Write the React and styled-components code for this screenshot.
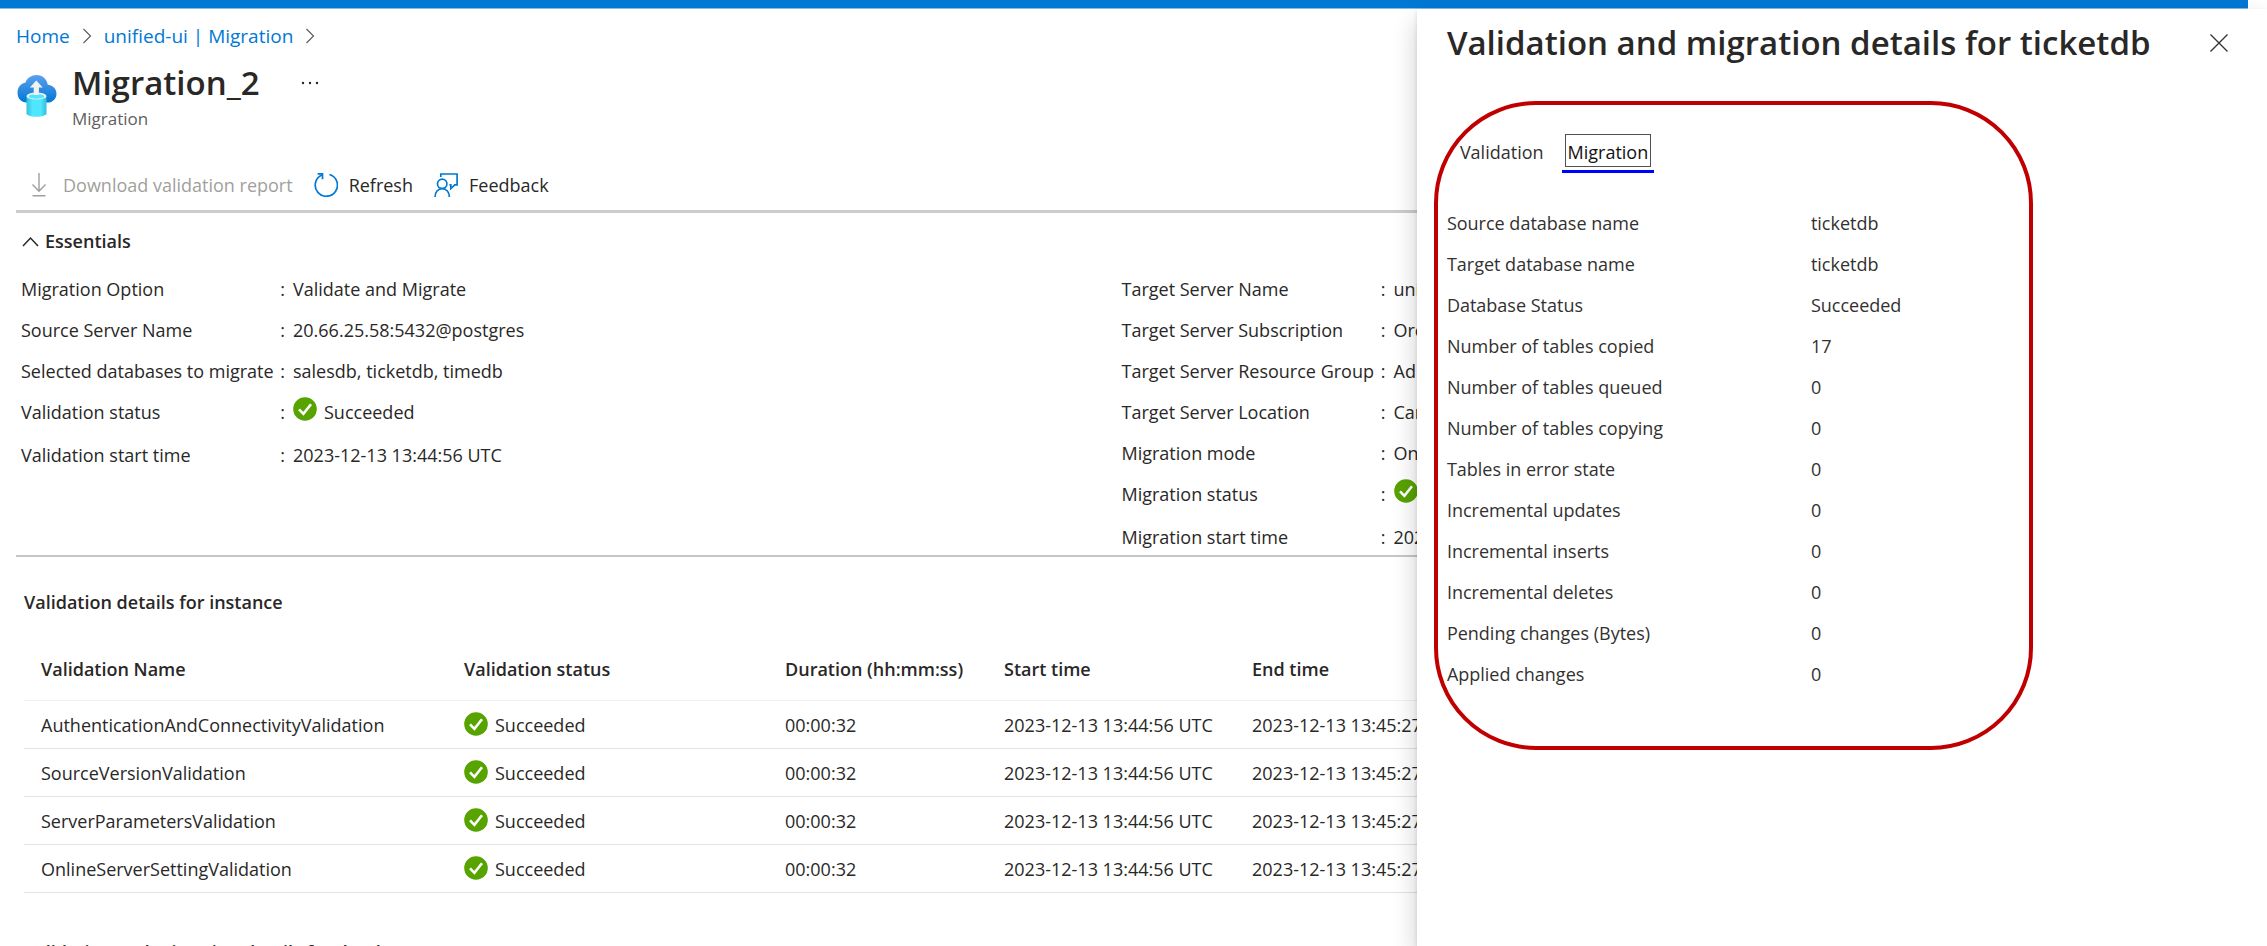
import React, { useState } from "react";
import styled, { createGlobalStyle, css } from "styled-components";

const GlobalStyle = createGlobalStyle`
  *, *::before, *::after { box-sizing: border-box; }
  body {
    margin: 0;
    background: #fff;
    color: #292827;
    font: 400 18px/24px "Open Sans", "Noto Sans", sans-serif;
  }
  h1, h2, h3, p, dl, dd, ol { margin: 0; padding: 0; }
  button { font: inherit; color: inherit; background: none; border: 0; padding: 0; cursor: pointer; }
  svg { display: block; flex: none; }
`;

const Shell = styled.div`
  position: relative;
  height: 100vh;
  overflow: hidden;
`;

const TopBar = styled.div`
  height: 9px;
  margin-right: 19px;
  background: #0078d4;
  border-bottom: 1px solid #80bcea;
`;

const Page = styled.main`
  padding: 15px 45px 0 16px;
`;

const Breadcrumb = styled.nav`
  ol {
    display: flex;
    align-items: center;
    gap: 12px;
    list-style: none;
    font-size: 19px;
  }
  li {
    display: flex;
    align-items: center;
    gap: 12px;
  }
`;

const CrumbLink = styled.a`
  color: #0078d4;
  text-decoration: none;
`;

const Header = styled.header`
  display: flex;
  gap: 15px;
  margin-top: 15px;

  > svg { margin-top: 11px; }
`;

const TitleLine = styled.div`
  display: flex;
  align-items: center;
  gap: 41px;
`;

const PageTitle = styled.h1`
  font-size: 33px;
  line-height: 40px;
  font-weight: 600;
`;

const Subtitle = styled.p`
  margin-top: 4px;
  font-size: 17px;
  color: #605e5c;
`;

const Toolbar = styled.div`
  display: flex;
  align-items: center;
  gap: 21px;
  height: 54px;
  margin-top: 28px;
  padding-left: 2px;
  border-bottom: 3px solid #ccc;
`;

const ToolButton = styled.button`
  display: flex;
  align-items: center;
  gap: 11px;

  &:disabled {
    color: #a19f9d;
    cursor: default;
  }
`;

const EssentialsToggle = styled.button`
  display: flex;
  align-items: center;
  gap: 6px;
  margin: 16px 0 0 6px;
  font-weight: 600;
`;

const Essentials = styled.section`
  display: grid;
  grid-template-columns: 1fr 1fr;
  padding: 24px 0 6px 5px;
  border-bottom: 2px solid #c8c6c4;
`;

const PropertyList = styled.dl`
  display: flex;
  flex-direction: column;
  gap: 17px;
`;

const Property = styled.div`
  display: grid;
  grid-template-columns: 264px 1fr;
  min-height: ${(p) => (p.$tall ? "26px" : "24px")};
  white-space: nowrap;

  dt {
    display: flex;
    justify-content: space-between;
  }
  dt::after { content: ":"; }
  dd { padding-left: 8px; }
`;

const StatusBox = styled.span`
  display: flex;
  gap: 7px;
  height: 24px;

  svg { margin-top: ${(p) => (p.$raised ? "-3px" : "-1px")}; }
`;

const SectionTitle = styled.h2`
  margin: ${(p) => p.$top}px 0 0 8px;
  font-size: 18px;
  line-height: 24px;
  font-weight: 600;
`;

const Table = styled.table`
  width: 100%;
  margin: 23px 0 0 8px;
  border-collapse: separate;
  border-spacing: 0;
  table-layout: fixed;
`;

const Column = styled.col`
  width: ${(p) => p.$width};
`;

const HeadCell = styled.th`
  height: 64px;
  padding: 0 0 0 17px;
  border-bottom: 1px solid #f0efee;
  text-align: left;
  font-weight: 600;
`;

const Cell = styled.td`
  height: 48px;
  padding: 0 0 0 17px;
  border-bottom: 1px solid #e3e2e1;
`;

const Panel = styled.aside`
  position: absolute;
  top: 9px;
  right: 0;
  bottom: 0;
  width: 37.5%;
  padding: 14px 32px 0 30px;
  background: #fff;
  color: #323130;
  box-shadow: 0 12px 24px rgba(0, 0, 0, 0.2), 0 2px 4px rgba(0, 0, 0, 0.12);
`;

const PanelHeader = styled.div`
  display: flex;
  justify-content: space-between;
  align-items: center;
`;

const PanelTitle = styled.h2`
  font-size: 33px;
  line-height: 40px;
  font-weight: 600;
  color: #292827;
  white-space: nowrap;
`;

const CloseButton = styled.button`
  display: grid;
  place-items: center;
  width: 32px;
  height: 32px;
`;

const PanelBody = styled.div`
  position: relative;
  max-width: 586px;
  margin-top: 71px;
`;

const Highlight = styled.div`
  position: absolute;
  inset: -33px 0 -64px -13px;
  border: 4px solid #c00000;
  border-radius: 102px;
  pointer-events: none;
`;

const TabList = styled.div`
  display: flex;
  gap: 12px;
  padding-left: 7px;
`;

const Tab = styled.button`
  padding: 0 3px 3px;
  border-bottom: 3px solid transparent;

  span {
    display: block;
    padding: 3px 2px 0;
    border: 1px solid transparent;
    line-height: 28px;
  }

  ${(p) =>
    p["aria-selected"] &&
    css`
      color: #111;
      border-bottom-color: #0000ff;
      span { border-color: #505050; }
    `}
`;

const DetailList = styled.dl`
  display: grid;
  grid-template-columns: 364px 1fr;
  row-gap: 17px;
  margin-top: 38px;
`;

const ChevronRight = () => (
  <svg width="10" height="16" viewBox="0 0 10 16" fill="none" stroke="#605e5c" strokeWidth="1.2" aria-hidden="true">
    <path d="M1.5 1 8.5 8l-7 7" />
  </svg>
);

const ChevronUp = () => (
  <svg width="17" height="11" viewBox="0 0 17 11" fill="none" stroke="#292827" strokeWidth="1.5" aria-hidden="true">
    <path d="M1 10 8.5 2 16 10" />
  </svg>
);

const MigrationIcon = () => (
  <svg width="41" height="44" viewBox="0 0 41 44" aria-hidden="true">
    <defs>
      <linearGradient id="cloud" x1="0" y1="0" x2="0" y2="1">
        <stop offset="0" stopColor="#5ea0ef" />
        <stop offset="1" stopColor="#0078d4" />
      </linearGradient>
      <linearGradient id="cylinder" x1="0" y1="0" x2="1" y2="0">
        <stop offset="0" stopColor="#32bedd" />
        <stop offset="0.3" stopColor="#50e6ff" />
        <stop offset="0.7" stopColor="#50e6ff" />
        <stop offset="1" stopColor="#32bedd" />
      </linearGradient>
    </defs>
    <path
      d="M10.500 28.500C5.500 28.500 1.500 24.500 1.500 18.700c0-5.400 3.300-9.300 8-10.200C11.200 3.800 15.600 1 20.600 1c5.900 0 10.300 4 11.200 9.700 5 .6 8.700 4 8.700 9 0 5-3.800 8.800-9 8.800z"
      fill="url(#cloud)"
    />
    <path d="M10.500 22v17.500c0 1.900 4.500 3.200 10 3.200s10-1.300 10-3.200V22z" fill="url(#cylinder)" />
    <ellipse cx="20.500" cy="22" rx="10" ry="3.600" fill="#f2f2f2" />
    <ellipse cx="20.500" cy="22.400" rx="7.800" ry="2.300" fill="#50e6ff" />
    <path d="M20.300 6.500 13.800 13.500h3.900v7.500h5.200v-7.500h3.900z" fill="#f2f2f2" />
  </svg>
);

const MoreIcon = () => (
  <svg width="18" height="4" viewBox="0 0 18 4" fill="#292827" aria-hidden="true">
    <circle cx="2" cy="2" r="1.200" />
    <circle cx="9" cy="2" r="1.200" />
    <circle cx="16" cy="2" r="1.200" />
  </svg>
);

const DownloadIcon = () => (
  <svg width="34" height="24" viewBox="0 0 34 24" fill="none" stroke="#a19f9d" strokeWidth="1.400" aria-hidden="true">
    <path d="M21 0v18M14.500 11.500 21 18.200l6.500-6.700M14.500 22.800h13" />
  </svg>
);

const RefreshIcon = () => (
  <svg width="24" height="24" viewBox="0 0 24 24" fill="none" stroke="#0078d4" strokeWidth="1.700" aria-hidden="true">
    <path d="M15.500 1.500A11.100 11.100 0 1 1 7.800 2" />
    <path d="M3.600.9h4.900v5.300" />
  </svg>
);

const FeedbackIcon = () => (
  <svg width="24" height="24" viewBox="0 0 24 24" fill="none" stroke="#0078d4" strokeWidth="1.700" aria-hidden="true">
    <circle cx="8.200" cy="10.800" r="4.700" />
    <path d="M1 24c0-4.800 3-8.300 7.200-8.300s7.200 3.500 7.200 8.300" />
    <path d="M6.800 4V1h16.300v10.800h-2.300l-4 3.800v-3.800h-1.400" />
  </svg>
);

const SuccessIcon = () => (
  <svg width="24" height="24" viewBox="0 0 24 24" aria-hidden="true">
    <circle cx="12" cy="12" r="11.800" fill="#57a300" />
    <path d="M6 12.300 10.400 16.800 18 7.200" fill="none" stroke="#fff" strokeWidth="2.600" />
  </svg>
);

const CloseIcon = () => (
  <svg width="18" height="18" viewBox="0 0 18 18" fill="none" stroke="#323130" strokeWidth="1.300" aria-hidden="true">
    <path d="M.5.5l17 17M17.500.5l-17 17" />
  </svg>
);

const Status = ({ raised }) => (
  <StatusBox $raised={raised}>
    <SuccessIcon />
    Succeeded
  </StatusBox>
);

const SUCCEEDED = "Succeeded";

const sourceProperties = [
  ["Migration Option", "Validate and Migrate"],
  ["Source Server Name", "20.66.25.58:5432@postgres"],
  ["Selected databases to migrate", "salesdb, ticketdb, timedb"],
  ["Validation status", SUCCEEDED],
  ["Validation start time", "2023-12-13 13:44:56 UTC"],
];

const targetProperties = [
  ["Target Server Name", "unified-ui"],
  ["Target Server Subscription", "Orcas"],
  ["Target Server Resource Group", "Ad"],
  ["Target Server Location", "Canada Central"],
  ["Migration mode", "Online"],
  ["Migration status", SUCCEEDED],
  ["Migration start time", "2023-12-13 13:44:56 UTC"],
];

const columns = [
  ["Validation Name", "423px"],
  ["Validation status", "321px"],
  ["Duration (hh:mm:ss)", "219px"],
  ["Start time", "248px"],
  ["End time", "auto"],
];

const validations = [
  "AuthenticationAndConnectivityValidation",
  "SourceVersionValidation",
  "ServerParametersValidation",
  "OnlineServerSettingValidation",
];

const migrationDetails = [
  ["Source database name", "ticketdb"],
  ["Target database name", "ticketdb"],
  ["Database Status", "Succeeded"],
  ["Number of tables copied", "17"],
  ["Number of tables queued", "0"],
  ["Number of tables copying", "0"],
  ["Tables in error state", "0"],
  ["Incremental updates", "0"],
  ["Incremental inserts", "0"],
  ["Incremental deletes", "0"],
  ["Pending changes (Bytes)", "0"],
  ["Applied changes", "0"],
];

const Properties = ({ items }) => (
  <PropertyList>
    {items.map(([label, value]) => (
      <Property key={label} $tall={value === SUCCEEDED}>
        <dt>{label}</dt>
        <dd>{value === SUCCEEDED ? <Status raised /> : value}</dd>
      </Property>
    ))}
  </PropertyList>
);

export default function App() {
  const [tab, setTab] = useState("Migration");

  return (
    <Shell>
      <GlobalStyle />
      <TopBar />
      <Page>
        <Breadcrumb aria-label="Breadcrumb">
          <ol>
            <li>
              <CrumbLink href="#home">Home</CrumbLink>
              <ChevronRight />
            </li>
            <li>
              <CrumbLink href="#migration">unified-ui | Migration</CrumbLink>
              <ChevronRight />
            </li>
          </ol>
        </Breadcrumb>

        <Header>
          <MigrationIcon />
          <div>
            <TitleLine>
              <PageTitle>Migration_2</PageTitle>
              <button type="button" aria-label="More options">
                <MoreIcon />
              </button>
            </TitleLine>
            <Subtitle>Migration</Subtitle>
          </div>
        </Header>

        <Toolbar>
          <ToolButton type="button" disabled>
            <DownloadIcon />
            Download validation report
          </ToolButton>
          <ToolButton type="button">
            <RefreshIcon />
            Refresh
          </ToolButton>
          <ToolButton type="button">
            <FeedbackIcon />
            Feedback
          </ToolButton>
        </Toolbar>

        <EssentialsToggle type="button" aria-expanded="true">
          <ChevronUp />
          Essentials
        </EssentialsToggle>
        <Essentials>
          <Properties items={sourceProperties} />
          <Properties items={targetProperties} />
        </Essentials>

        <SectionTitle $top={33}>Validation details for instance</SectionTitle>
        <Table>
          <colgroup>
            {columns.map(([name, width]) => (
              <Column key={name} $width={width} />
            ))}
          </colgroup>
          <thead>
            <tr>
              {columns.map(([name]) => (
                <HeadCell key={name} scope="col">{name}</HeadCell>
              ))}
            </tr>
          </thead>
          <tbody>
            {validations.map((name) => (
              <tr key={name}>
                <Cell>{name}</Cell>
                <Cell><Status /></Cell>
                <Cell>00:00:32</Cell>
                <Cell>2023-12-13 13:44:56 UTC</Cell>
                <Cell>2023-12-13 13:45:27 UTC</Cell>
              </tr>
            ))}
          </tbody>
        </Table>

        <SectionTitle $top={47}>Validation and migration details for database</SectionTitle>
      </Page>

      <Panel aria-labelledby="panel-title">
        <PanelHeader>
          <PanelTitle id="panel-title">Validation and migration details for ticketdb</PanelTitle>
          <CloseButton type="button" aria-label="Close">
            <CloseIcon />
          </CloseButton>
        </PanelHeader>
        <PanelBody>
          <TabList role="tablist">
            {["Validation", "Migration"].map((name) => (
              <Tab
                key={name}
                type="button"
                role="tab"
                aria-selected={tab === name}
                onClick={() => setTab(name)}
              >
                <span>{name}</span>
              </Tab>
            ))}
          </TabList>
          <DetailList>
            {migrationDetails.map(([label, value]) => (
              <React.Fragment key={label}>
                <dt>{label}</dt>
                <dd>{value}</dd>
              </React.Fragment>
            ))}
          </DetailList>
          <Highlight />
        </PanelBody>
      </Panel>
    </Shell>
  );
}
